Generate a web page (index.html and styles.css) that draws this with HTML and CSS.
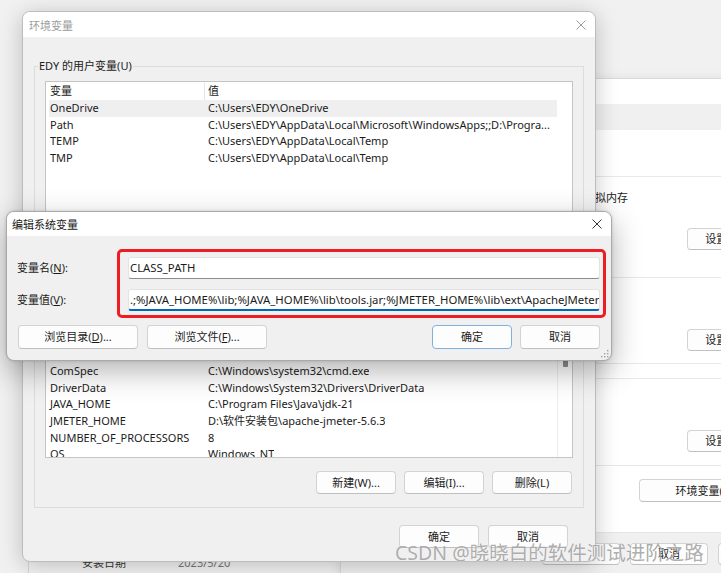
FILE: index.html
```html
<!DOCTYPE html>
<html lang="zh-CN">
<head>
<meta charset="utf-8">
<title>环境变量</title>
<link rel="stylesheet" href="styles.css">
</head>
<body>
<div class="desktop">

  <section class="win win-info">
    <div class="info-row"><span class="info-key">安装日期</span><span class="info-val">2023/5/20</span></div>
  </section>

  <section class="win win-sys">
    <div class="sys-title">系统属性</div>
    <div class="sys-tabs"></div>
    <div class="sys-sec sys-a"></div>
    <div class="sys-sec sys-b">
      <p class="sys-text">视觉效果，处理器计划，内存使用，以及虚拟内存</p>
      <div class="sys-btn-row"><button class="btn btn-set">设置(S)...</button></div>
    </div>
    <div class="sys-sec sys-c"><div class="sys-btn-row"><button class="btn btn-set">设置(E)...</button></div></div>
    <div class="sys-sec sys-d"></div>
    <div class="sys-sec sys-e"><div class="sys-btn-row"><button class="btn btn-set">设置(T)...</button></div></div>
    <div class="sys-f"><div class="sys-btn-row env-row"><button class="btn btn-env">环境变量(N)...</button></div></div>
    <div class="sys-footer">
      <button class="btn btn-foot">确定</button>
      <button class="btn btn-foot">取消</button>
      <button class="btn btn-foot">应用(A)</button>
    </div>
  </section>

  <section class="win win-env">
    <header class="titlebar inactive">
      <span class="title">环境变量</span>
      <svg class="close" width="10" height="10" viewBox="0 0 10 10"><path d="M0.5 0.5L9.5 9.5M9.5 0.5L0.5 9.5" stroke="currentColor" stroke-width="1" fill="none"/></svg>
    </header>
    <div class="env-body">
      <fieldset class="group">
        <legend>EDY 的用户变量(U)</legend>
        <div class="list list-user">
          <div class="list-main">
            <div class="list-head"><span class="hcol1">变量</span><span class="hcol2">值</span></div>
            <div class="row selected"><span class="col1">OneDrive</span><span class="col2">C:\Users\EDY\OneDrive</span></div>
            <div class="row"><span class="col1">Path</span><span class="col2">C:\Users\EDY\AppData\Local\Microsoft\WindowsApps;;D:\Progra...</span></div>
            <div class="row"><span class="col1">TEMP</span><span class="col2">C:\Users\EDY\AppData\Local\Temp</span></div>
            <div class="row"><span class="col1">TMP</span><span class="col2">C:\Users\EDY\AppData\Local\Temp</span></div>
          </div>
          <div class="scroll"></div>
        </div>
        <div class="btn-row">
          <button class="btn btn-std">新建(N)...</button>
          <button class="btn btn-std">编辑(E)...</button>
          <button class="btn btn-std">删除(D)</button>
        </div>
      </fieldset>

      <fieldset class="group group-sys">
        <legend>系统变量(S)</legend>
        <div class="list list-sys">
          <div class="list-main">
            <div class="list-head"><span class="hcol1">变量</span><span class="hcol2">值</span></div>
            <div class="row"><span class="col1">CLASS_PATH</span><span class="col2">.;%JAVA_HOME%\lib;%JAVA_HOME%\lib\tools.jar;%JMETER_HOME%\lib\ext\ApacheJ...</span></div>
            <div class="row"><span class="col1">CLASSPATH</span><span class="col2">.;%JAVA_HOME%\lib\dt.jar;%JAVA_HOME%\lib\tools.jar</span></div>
            <div class="row"><span class="col1">CLASSPATH2</span><span class="col2">%JMETER_HOME%\lib\ext\ApacheJMeter_core.jar</span></div>
            <div class="row"><span class="col1">ComSpec</span><span class="col2">C:\Windows\system32\cmd.exe</span></div>
            <div class="row"><span class="col1">DriverData</span><span class="col2">C:\Windows\System32\Drivers\DriverData</span></div>
            <div class="row"><span class="col1">JAVA_HOME</span><span class="col2">C:\Program Files\Java\jdk-21</span></div>
            <div class="row"><span class="col1">JMETER_HOME</span><span class="col2">D:\软件安装包\apache-jmeter-5.6.3</span></div>
            <div class="row"><span class="col1">NUMBER_OF_PROCESSORS</span><span class="col2">8</span></div>
            <div class="row"><span class="col1">OS</span><span class="col2">Windows_NT</span></div>
            <div class="row"><span class="col1">Path</span><span class="col2">C:\Windows\system32;C:\Windows</span></div>
          </div>
          <div class="scroll"><div class="thumb"></div></div>
        </div>
        <div class="btn-row">
          <button class="btn btn-std">新建(W)...</button>
          <button class="btn btn-std">编辑(I)...</button>
          <button class="btn btn-std">删除(L)</button>
        </div>
      </fieldset>

      <div class="btn-row env-foot">
        <button class="btn btn-std">确定</button>
        <button class="btn btn-std">取消</button>
      </div>
    </div>
  </section>

  <section class="win win-edit">
    <header class="titlebar">
      <span class="title">编辑系统变量</span>
      <svg class="close" width="10" height="10" viewBox="0 0 10 10"><path d="M0.5 0.5L9.5 9.5M9.5 0.5L0.5 9.5" stroke="currentColor" stroke-width="1" fill="none"/></svg>
    </header>
    <div class="edit-body">
      <div class="form">
        <label class="form-label">变量名(<u>N</u>):</label>
        <div class="input">CLASS_PATH</div>
        <label class="form-label">变量值(<u>V</u>):</label>
        <div class="input focus">.;%JAVA_HOME%\lib;%JAVA_HOME%\lib\tools.jar;%JMETER_HOME%\lib\ext\ApacheJMeter_core.jar</div>
      </div>
      <div class="edit-buttons">
        <button class="btn btn-wide">浏览目录(<u>D</u>)...</button>
        <button class="btn btn-wide">浏览文件(<u>F</u>)...</button>
        <button class="btn btn-ok">确定</button>
        <button class="btn btn-std">取消</button>
      </div>
    </div>
    <div class="annot"></div>
    <svg class="grip" width="8" height="8" viewBox="0 0 8 8">
      <g fill="#a0a0a0">
        <rect x="6" y="0" width="1.4" height="1.4"/>
        <rect x="3" y="3" width="1.4" height="1.4"/>
        <rect x="6" y="3" width="1.4" height="1.4"/>
        <rect x="0" y="6" width="1.4" height="1.4"/>
        <rect x="3" y="6" width="1.4" height="1.4"/>
        <rect x="6" y="6" width="1.4" height="1.4"/>
      </g>
    </svg>
  </section>

  <div class="watermark">CSDN @晓晓白的软件测试进阶之路</div>
</div>
</body>
</html>
```

FILE: styles.css
```css
* { box-sizing: border-box; }

html, body {
  margin: 0;
  padding: 0;
}

body {
  width: 721px;
  height: 573px;
  overflow: hidden;
  font-family: "Noto Sans", "Noto Sans CJK SC", sans-serif;
  font-size: 11px;
  color: #1b1b1b;
}

.desktop {
  position: relative;
  width: 721px;
  height: 573px;
  overflow: hidden;
  background: #f1f1f1;
}

.win {
  position: absolute;
}

/* ---------- bottom "about" window ---------- */
.win-info {
  left: 28px;
  top: 300px;
  width: 344px;
  height: 300px;
  background: #f3f3f3;
  border: 1px solid #d6d6d6;
}

.info-row {
  display: flex;
  padding: 254px 0 0 53px;
  line-height: 16px;
}

.info-key { width: 96px; color: #333; }
.info-val { color: #777; }

/* ---------- system properties window ---------- */
.win-sys {
  left: 340px;
  top: 78px;
  width: 480px;
  height: 520px;
  background: #fff;
  border: 1px solid #d9d9d9;
  border-radius: 8px 8px 0 0;
  box-shadow: 0 2px 12px rgba(0, 0, 0, 0.10);
  display: flex;
  flex-direction: column;
  overflow: hidden;
}

.sys-title {
  height: 25px;
  line-height: 25px;
  padding-left: 10px;
  color: #999;
  flex: none;
}

.sys-tabs {
  height: 26px;
  background: #f0f0f0;
  flex: none;
}

.sys-sec {
  flex: none;
  border-bottom: 1px solid #e8e8e8;
}

.sys-a { height: 47px; }
.sys-b { height: 101px; padding-top: 13px; }
.sys-c { height: 86px; padding-top: 51px; }
.sys-d { height: 15px; }
.sys-e { height: 87px; padding-top: 51px; }
.sys-f { height: 66px; padding-top: 13px; flex: none; }

.sys-text {
  margin: 0;
  padding-left: 45px;
  line-height: 16px;
  white-space: nowrap;
}

.sys-btn-row {
  display: flex;
  justify-content: flex-end;
  padding-right: 52px;
}

.sys-b .sys-btn-row { margin-top: 22px; }

.env-row { padding-right: 39px; }

.sys-footer {
  flex: 1;
  background: #f0f0f0;
  border-top: 1px solid #e5e5e5;
  padding: 10px 23px 0 0;
  display: flex;
  justify-content: flex-end;
  align-items: flex-start;
  gap: 10px;
}

/* ---------- buttons ---------- */
.btn {
  font: inherit;
  color: #1b1b1b;
  height: 23px;
  padding: 0;
  background: #fdfdfd;
  border: 1px solid #d3d3d3;
  border-bottom-color: #c0c0c0;
  border-radius: 4px;
  line-height: 20px;
  white-space: nowrap;
}

.btn-std { width: 80px; }
.btn-set { width: 80px; height: 22px; }
.btn-env { width: 141px; }
.btn-foot { width: 78px; height: 22px; }
.btn-wide { width: 120px; height: 24px; }
.btn-ok {
  width: 80px;
  height: 24px;
  border-color: #7fb1df;
  margin-left: auto;
}

/* ---------- title bars ---------- */
.titlebar {
  flex: none;
  display: flex;
  align-items: center;
  justify-content: space-between;
  background: #fff;
  color: #1b1b1b;
}

.titlebar.inactive { color: #9c9c9c; }

.close { display: block; }

/* ---------- environment variables dialog ---------- */
.win-env {
  left: 22px;
  top: 11px;
  width: 574px;
  height: 551px;
  background: #f0f0f0;
  border: 1px solid #bdbdbd;
  border-radius: 8px;
  box-shadow: 0 4px 22px rgba(0, 0, 0, 0.22);
  display: flex;
  flex-direction: column;
  overflow: hidden;
}

.win-env .titlebar {
  height: 25px;
  padding: 0 9px 0 6px;
}

.env-body {
  flex: 1;
  padding: 21px 11px 0;
  display: flex;
  flex-direction: column;
}

.group {
  margin: 0;
  min-width: 0;
  padding: 7px 10px 10px;
  border: 1px solid #dcdcdc;
}

.group legend {
  padding: 0 1px;
  margin-left: -7px;
  line-height: 16px;
}

.group-sys {
  margin-top: 8px;
  padding-bottom: 13px;
}

.list {
  display: flex;
  background: #fff;
  border: 1px solid #c4c4c4;
  overflow: hidden;
}

.list-user { height: 140px; }
.list-sys { height: 164px; }

.list-main {
  flex: 1;
  min-width: 0;
  padding-left: 3px;
  overflow: hidden;
}

.list-head {
  display: flex;
  height: 18px;
  line-height: 18px;
}

.hcol1 {
  width: 156px;
  padding-left: 1px;
  border-right: 1px solid #e6e6e6;
}

.hcol2 { padding-left: 3px; }

.row {
  display: flex;
  height: 16.67px;
  line-height: 16.67px;
  white-space: nowrap;
}

.row.selected { background: #efefef; }

.col1 {
  flex: none;
  width: 159px;
  padding-left: 1px;
}

.col2 {
  overflow: hidden;
}

.scroll {
  flex: none;
  width: 15px;
  padding-left: 5px;
}

.list-sys .scroll { border-left: 1px solid #ededed; }

.thumb {
  width: 5px;
  height: 67px;
  margin-top: 5px;
  background: #8d8d8d;
  border-radius: 1px;
}

.btn-row {
  display: flex;
  justify-content: flex-end;
  gap: 8px;
  margin-top: 8px;
  margin-right: 1px;
}

.group-sys .btn-row { margin-top: 13px; }

.env-foot {
  margin-top: 17px;
  margin-right: 16px;
  gap: 9px;
}

/* ---------- edit dialog ---------- */
.win-edit {
  left: 6px;
  top: 211px;
  width: 606px;
  height: 150px;
  background: #f0f0f0;
  border: 1px solid #a9a9a9;
  border-radius: 8px;
  box-shadow: 0 10px 30px rgba(0, 0, 0, 0.30), 0 0 3px rgba(0, 0, 0, 0.15);
  display: flex;
  flex-direction: column;
}

.win-edit .titlebar {
  height: 24px;
  padding: 0 9px 0 5px;
  border-radius: 7px 7px 0 0;
}

.win-edit .close { color: #333; }

.edit-body {
  padding: 21px 11px 11px;
}

.form {
  display: grid;
  grid-template-columns: 110px 1fr;
  row-gap: 10px;
  align-items: center;
}

.form-label {
  margin-left: -1px;
  line-height: 22px;
}

.input {
  height: 22px;
  background: #fff;
  border: 1px solid #e3e3e3;
  border-bottom-color: #8c8c8c;
  border-radius: 3px;
  padding: 0 1px;
  font-size: 11.35px;
  line-height: 20px;
  white-space: nowrap;
  overflow: hidden;
}

.input.focus {
  border-bottom: 2px solid #0067c0;
  line-height: 20px;
}

.edit-buttons {
  display: flex;
  gap: 9px;
  margin-top: 14px;
}

.edit-buttons .btn-std {
  height: 24px;
  margin-left: -1px;
}

.annot {
  position: absolute;
  left: 110px;
  top: 37px;
  width: 489px;
  height: 69px;
  border: 3px solid #ee1d23;
  border-radius: 5px;
}

.grip {
  position: absolute;
  right: 2px;
  bottom: 2px;
}

/* ---------- watermark ---------- */
.watermark {
  position: absolute;
  left: 395px;
  top: 541px;
  font-size: 19.5px;
  line-height: 24px;
  white-space: nowrap;
  color: rgba(120, 120, 120, 0.62);
  text-shadow: 0 0 1px rgba(255, 255, 255, 0.9);
}
```
